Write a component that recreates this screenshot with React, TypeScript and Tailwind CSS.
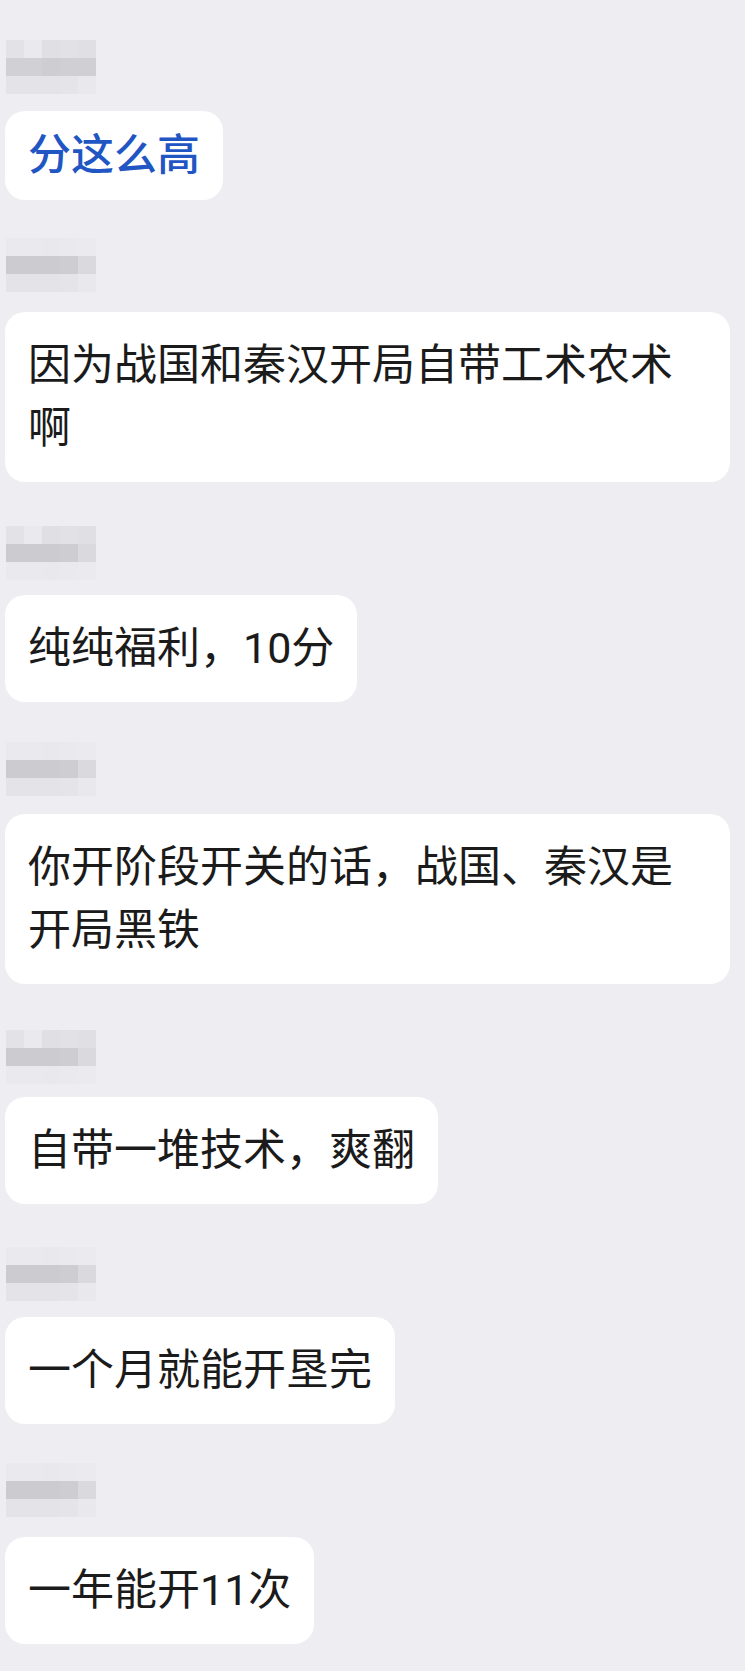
import React from 'react';

type Group = {
    nameGap: string;
    bubbleGap: string;
    rows: string[][];
    text: string;
    accent?: boolean;
};

const faint = ['#e9e9ee', '#e9e9ee', '#e8e8ed', '#e9e9ee', '#eaeaef'];
const soft = ['#e3e3e8', '#e3e3e8', '#e3e3e8', '#e4e4e9', '#e8e8ed'];
const dark = ['#cbcbd0', '#cbcbd0', '#cbcbd0', '#cdcdd2', '#d9d9de'];
const light = ['#e2e2e7', '#eaeaee', '#dfdfe4', '#e1e1e6', '#dfdfe4'];

const groups: Group[] = [
    {
        nameGap: 'mt-[40px]',
        bubbleGap: 'mt-[17px]',
        rows: [light, ['#d0d0d5', '#d0d0d5', '#cdcdd2', '#cfcfd4', '#cfcfd4'], soft],
        text: '分这么高',
        accent: true,
    },
    { nameGap: 'mt-[38px]', bubbleGap: 'mt-[20px]', rows: [faint, dark, soft], text: '因为战国和秦汉开局自带工术农术啊' },
    { nameGap: 'mt-[44px]', bubbleGap: 'mt-[15px]', rows: [light, dark, faint], text: '纯纯福利，10分' },
    { nameGap: 'mt-[40px]', bubbleGap: 'mt-[18px]', rows: [faint, dark, soft], text: '你开阶段开关的话，战国、秦汉是开局黑铁' },
    { nameGap: 'mt-[46px]', bubbleGap: 'mt-[13px]', rows: [light, dark, faint], text: '自带一堆技术，爽翻' },
    { nameGap: 'mt-[43px]', bubbleGap: 'mt-[16px]', rows: [faint, dark, soft], text: '一个月就能开垦完' },
    { nameGap: 'mt-[39px]', bubbleGap: 'mt-[20px]', rows: [faint, dark, soft], text: '一年能开11次' },
];

function BlurredName({ rows }: { rows: string[][] }) {
    // pixelated nickname, 18px mosaic cells
    return (
        <div className="ml-px flex flex-col">
            {rows.map((row, i) => (
                <div key={i} className="flex">
                    {row.map((c, j) => (
                        <div key={j} className="h-[18px] w-[18px]" style={{ backgroundColor: c }} />
                    ))}
                </div>
            ))}
        </div>
    );
}

export default function App() {
    return (
        <div
            className="min-h-[1671px] w-full bg-[#ededf2] pl-[5px] pr-[15px]"
            style={{ fontFamily: 'Roboto, "Noto Sans CJK SC", sans-serif' }}
        >
            <div className="flex flex-col items-start">
                {groups.map((g, i) => (
                    <div key={i} className={`flex flex-col items-start ${g.nameGap}`}>
                        <BlurredName rows={g.rows} />
                        <div
                            className={`${g.bubbleGap} max-w-[725px] rounded-[20px] bg-white px-[23px] text-[43px] leading-[63px] ${g.accent
                                ? 'py-[13px] font-medium text-[#1f56c4]'
                                : 'py-[22px] text-[#1b1b1b]'
                                }`}
                        >
                            {g.text}
                        </div>
                    </div>
                ))}
            </div>
        </div>
    );
}
